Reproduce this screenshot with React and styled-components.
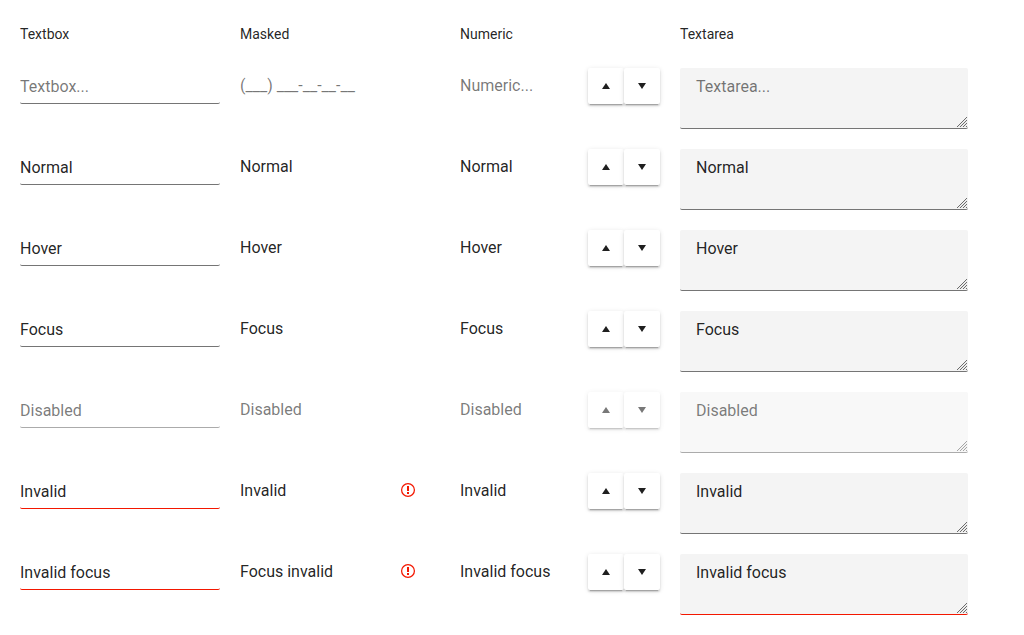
import React from 'react';
import styled, { createGlobalStyle } from 'styled-components';

const GlobalStyle = createGlobalStyle`
  body { margin: 0; background: #fff; font-family: Roboto, sans-serif; color: rgba(0,0,0,0.87); }
  * { box-sizing: border-box; }
`;
const Page = styled.main`
  padding: 24px 20px 0;
  width: 1024px;
  height: 635px;
  overflow: hidden;
`;
const Header = styled.header`
  display: grid;
  grid-template-columns: 200px 200px 200px 288px;
  column-gap: 20px;
  height: 44px;
  font-size: 14px;
  line-height: 20px;
`;
const Row = styled.section`
  display: grid;
  grid-template-columns: 200px 200px 200px 288px;
  column-gap: 20px;
  height: 61px;
  margin-bottom: 20px;
  align-items: start;
  opacity: ${(p) => (p.$disabled ? 0.6 : 1)};
`;
const control = `
  font: 400 16px/20px Roboto, sans-serif;
  border: 0;
  border-radius: 0;
  outline: 0;
  background: transparent;
  color: rgba(0,0,0,0.87);
  &::placeholder { color: rgba(0,0,0,0.54); opacity: 1; }
`;
const TextBox = styled.input`
  ${control}
  width: 200px;
  height: 36px;
  padding: 2px 0 0;
  border-bottom: 1px solid ${(p) => (p.$invalid ? '#f31700' : '#757575')};
  border-radius: 2px;
`;
const Field = styled.div`
  display: flex;
  align-items: center;
  justify-content: space-between;
  height: 36px;
`;
const PlainInput = styled.input`
  ${control}
  width: ${(p) => p.$width}px;
  height: 36px;
  padding: 0 0 2px;
`;
const Warning = styled.svg`
  width: 16px;
  height: 16px;
  margin: 0 24px 2px 0;
`;
const Spinner = styled.div`
  display: flex;
`;
const SpinButton = styled.button`
  display: grid;
  place-items: center;
  width: 36px;
  height: 36px;
  padding: 0;
  border: 0;
  border-radius: 2px;
  background: #fff;
  box-shadow: 0 3px 1px -2px rgba(0,0,0,.2), 0 2px 2px 0 rgba(0,0,0,.14), 0 1px 5px 0 rgba(0,0,0,.12);
`;
const AreaFrame = styled.div`
  position: relative;
`;
const TextArea = styled.textarea`
  ${control}
  display: block;
  width: 288px;
  height: 61px;
  padding: 9px 16px;
  background: #f4f4f4;
  border-bottom: 1px solid ${(p) => (p.$invalid ? '#f31700' : '#757575')};
  border-radius: 2px;
  resize: none;
`;
const Grip = styled.svg`
  position: absolute;
  right: 1px;
  bottom: 2px;
  width: 10px;
  height: 10px;
  pointer-events: none;
`;

const Arrow = ({ down }) => (
  <svg width="8" height="6" viewBox="0 0 8 6">
    <path d={down ? 'M0 0h8L4 6z' : 'M0 6h8L4 0z'} fill="#1f1f1f" />
  </svg>
);

const ResizeGrip = () => (
  <Grip viewBox="0 0 10 10" fill="none" aria-hidden="true">
    <path d="M0 10L10 0M3 10L10 3M6 10L10 6M9 10L10 9" stroke="#5c5c5c" strokeWidth=".9" />
    <path d="M1.5 10L10 1.5M4.5 10L10 4.5M7.5 10L10 7.5" stroke="#dedede" strokeWidth=".7" />
  </Grip>
);

const rows = [
  { placeholders: ['Textbox...', '(___) ___-__-__-__', 'Numeric...', 'Textarea...'] },
  { values: ['Normal', 'Normal', 'Normal', 'Normal'] },
  { values: ['Hover', 'Hover', 'Hover', 'Hover'] },
  { values: ['Focus', 'Focus', 'Focus', 'Focus'] },
  { values: ['Disabled', 'Disabled', 'Disabled', 'Disabled'], disabled: true },
  { values: ['Invalid', 'Invalid', 'Invalid', 'Invalid'], invalid: true },
  { values: ['Invalid focus', 'Focus invalid', 'Invalid focus', 'Invalid focus'], invalid: true, areaInvalid: true },
];

export default function App() {
  return (
    <>
      <GlobalStyle />
      <Page>
        <Header>
          <span>Textbox</span><span>Masked</span><span>Numeric</span><span>Textarea</span>
        </Header>
        {rows.map(({ values = [], placeholders = [], disabled, invalid, areaInvalid }, i) => (
          <Row key={i} $disabled={disabled}>
            <TextBox defaultValue={values[0]} placeholder={placeholders[0]} disabled={disabled} $invalid={invalid} />
            <Field>
              <PlainInput $width={160} defaultValue={values[1]} placeholder={placeholders[1]} disabled={disabled} />
              {invalid && (
                <Warning viewBox="0 0 16 16" fill="none" stroke="#f31700">
                  <circle cx="8" cy="8" r="6.4" strokeWidth="1.25" />
                  <path d="M8 4v5M8 10v2" strokeWidth="2" />
                </Warning>
              )}
            </Field>
            <Field>
              <PlainInput $width={128} defaultValue={values[2]} placeholder={placeholders[2]} disabled={disabled} />
              <Spinner>
                <SpinButton aria-label="Increase" disabled={disabled}><Arrow /></SpinButton>
                <SpinButton aria-label="Decrease" disabled={disabled}><Arrow down /></SpinButton>
              </Spinner>
            </Field>
            <AreaFrame>
              <TextArea defaultValue={values[3]} placeholder={placeholders[3]} disabled={disabled} $invalid={areaInvalid} />
              <ResizeGrip />
            </AreaFrame>
          </Row>
        ))}
      </Page>
    </>
  );
}
